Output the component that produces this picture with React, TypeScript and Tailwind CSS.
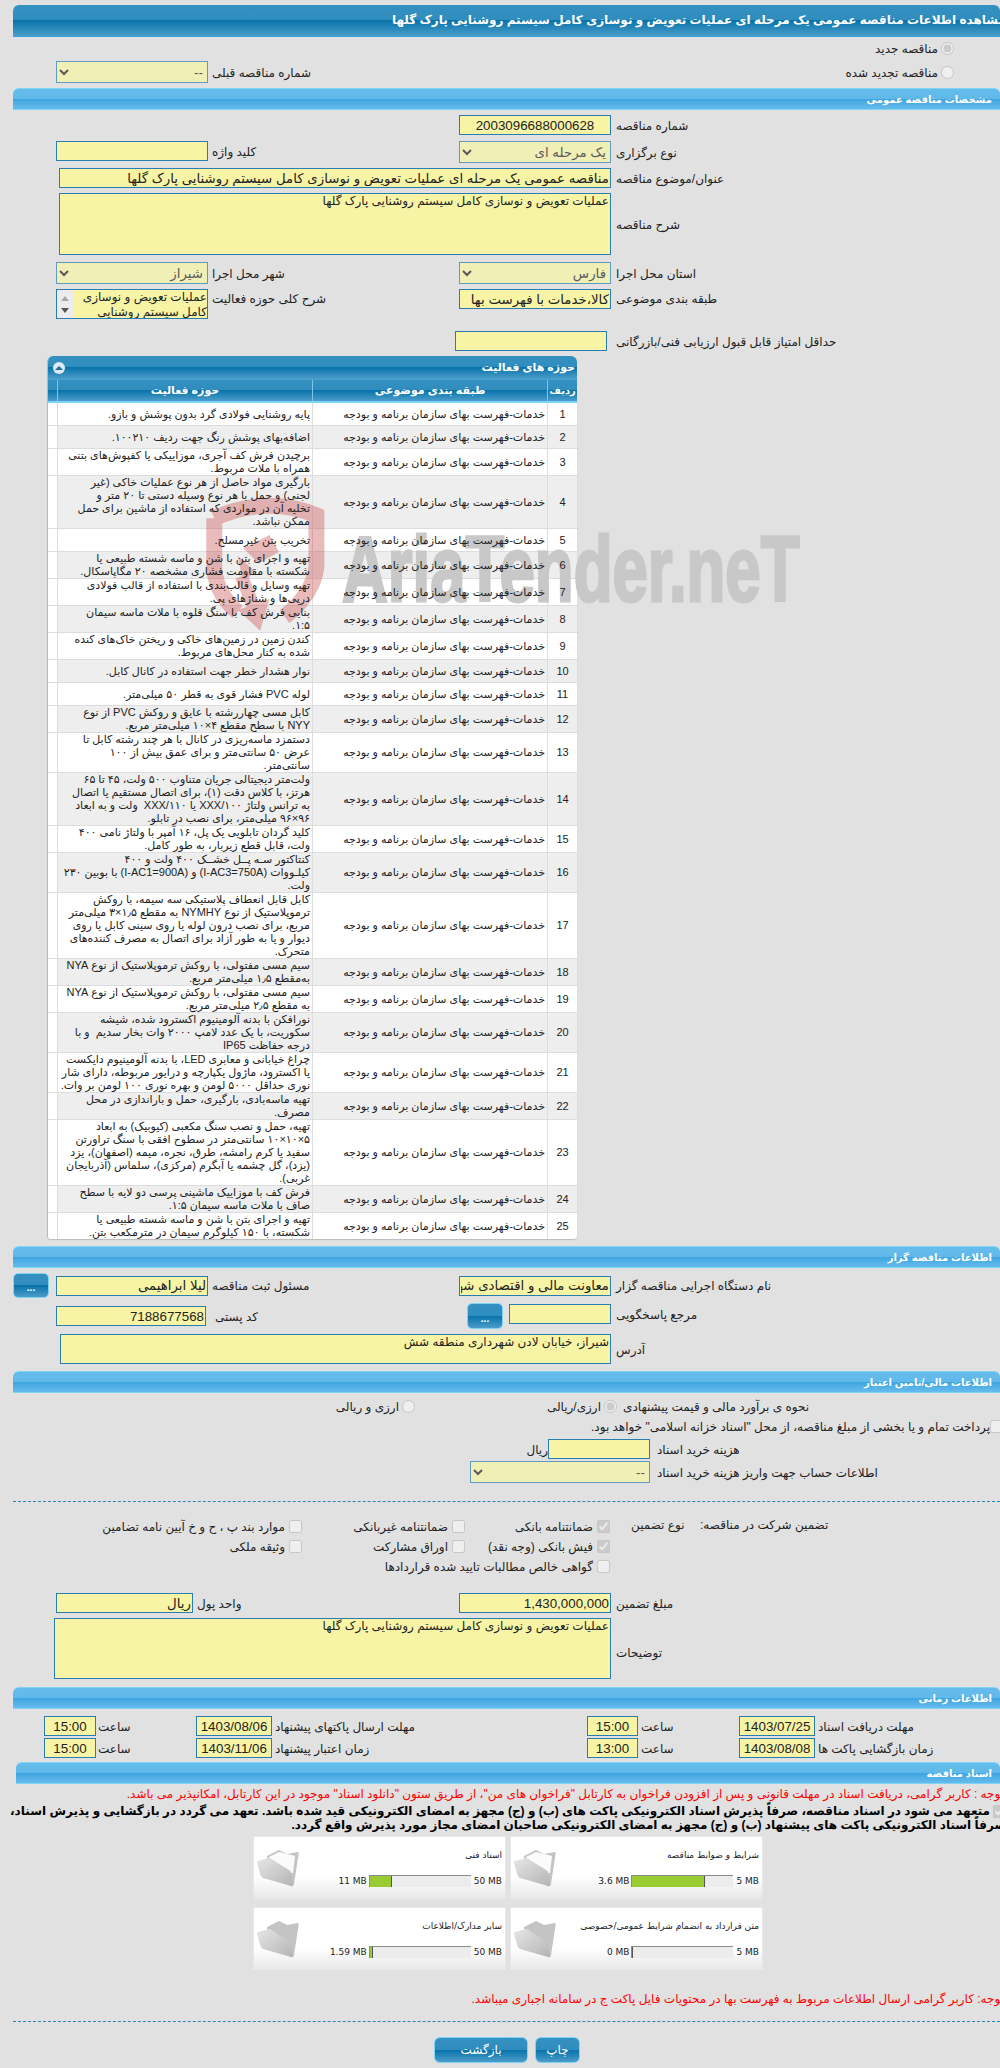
import React from 'react';

const darkBar = 'bg-[linear-gradient(to_bottom,#3490c0_0%,#2f8dbd_50%,#0873ab_50%,#4b9dc9_100%)]';
const lightBar = 'bg-[linear-gradient(to_bottom,#66bdec_0%,#60b8ea_50%,#3da5e0_50%,#66bcec_100%)] border-t border-b border-[#7fd3f5]';
const field = 'h-[20px] bg-[#f7f5a5] border border-[#2a7db0] px-[1px] text-[#222] outline-none text-[13.33px]';
const area = 'bg-[#f7f5a5] border border-[#2a7db0] px-[1px] text-[#222] outline-none resize-none block text-[12px] leading-[14px]';
const selectBox = 'h-[22px] bg-[#f7f5a5] border border-[#2a7db0] text-[#222] outline-none opacity-70 text-[13.33px]';

// line breaks follow the cell wrapping of the original table
const rows: [number, string][] = [
  [1, 'پایه روشنایی فولادی گرد بدون پوشش و بازو.'],
  [2, 'اضافه‌بهای پوشش رنگ جهت ردیف ۱۰۰۲۱۰.'],
  [3, 'برچیدن فرش کف آجری، موزاییکی یا کفپوش‌های بتنی\nهمراه با ملات مربوط.'],
  [4, 'بارگیری مواد حاصل از هر نوع عملیات خاکی (غیر\nلجنی) و حمل با هر نوع وسیله دستی تا ۲۰ متر و\nتخلیه آن در مواردی که استفاده از ماشین برای حمل\nممکن نباشد.'],
  [5, 'تخریب بتن غیرمسلح.'],
  [6, 'تهیه و اجرای بتن با شن و ماسه شسته طبیعی یا\nشکسته با مقاومت فشاری مشخصه ۲۰ مگاپاسکال.'],
  [7, 'تهیه وسایل و قالب‌بندی با استفاده از قالب فولادی\nدرپی‌ها و شناژهای پی.'],
  [8, 'بنایی فرش کف با سنگ قلوه با ملات ماسه سیمان\n۱:۵.'],
  [9, 'کندن زمین در زمین‌های خاکی و ریختن خاک‌های کنده\nشده به کنار محل‌های مربوط.'],
  [10, 'نوار هشدار خطر جهت استفاده در کانال کابل.'],
  [11, 'لوله PVC فشار قوی به قطر ۵۰ میلی‌متر.'],
  [12, 'کابل مسی چهاررشته با عایق و روکش PVC از نوع\nNYY با سطح مقطع ۴×۱۰ میلی‌متر مربع.'],
  [13, 'دستمزد ماسه‌ریزی در کانال با هر چند رشته کابل تا\nعرض ۵۰ سانتی‌متر و برای عمق بیش از ۱۰۰\nسانتی‌متر.'],
  [14, 'ولت‌متر دیجیتالی جریان متناوب ۵۰۰ ولت، ۴۵ تا ۶۵\nهرتز، با کلاس دقت (۱)، برای اتصال مستقیم یا اتصال\nبه ترانس ولتاژ XXX/۱۰۰ یا XXX/۱۱۰  ولت و به ابعاد\n۹۶×۹۶ میلی‌متر، برای نصب در تابلو.'],
  [15, 'کلید گردان تابلویی یک پل، ۱۶ آمپر با ولتاژ نامی ۴۰۰\nولت، قابل قطع زیربار، به طور کامل.'],
  [16, 'کنتاکتور سـه پــل خشــک ۴۰۰ ولت و ۴۰۰\nکیلـووات (I-AC3=750A) و (I-AC1=900A) با بوبین ۲۳۰\nولت.'],
  [17, 'کابل قابل انعطاف پلاستیکی سه سیمه، با روکش\nترموپلاستیک از نوع NYMHY به مقطع ۱٫۵×۳ میلی‌متر\nمربع، برای نصب درون لوله یا روی سینی کابل یا روی\nدیوار و یا به طور آزاد برای اتصال به مصرف کننده‌های\nمتحرک.'],
  [18, 'سیم مسی مفتولی، با روکش ترموپلاستیک از نوع NYA\nبه‌مقطع ۱٫۵ میلی‌متر مربع.'],
  [19, 'سیم مسی مفتولی، با روکش ترموپلاستیک از نوع NYA\nبه مقطع ۲٫۵ میلی‌متر مربع.'],
  [20, 'نورافکن با بدنه آلومینیوم اکسترود شده، شیشه\nسکوریت، با یک عدد لامپ ۲۰۰۰ وات بخار سدیم  و با\nدرجه حفاظت IP65'],
  [21, 'چراغ خیابانی و معابری LED، با بدنه آلومینیوم دایکست\nیا اکسترود، ماژول یکپارچه و درایور مربوطه، دارای شار\nنوری حداقل ۵۰۰۰ لومن و بهره نوری ۱۰۰ لومن بر وات.'],
  [22, 'تهیه ماسه‌بادی، بارگیری، حمل و باراندازی در محل\nمصرف.'],
  [23, 'تهیه، حمل و نصب سنگ مکعبی (کیوبیک) به ابعاد\n۵×۱۰×۱۰ سانتی‌متر در سطوح افقی با سنگ تراورتن\nسفید یا کرم رامشه، طرق، نجره، میمه (اصفهان)، یزد\n(یزد)، گل چشمه یا آبگرم (مرکزی)، سلماس (آذربایجان\nغربی).'],
  [24, 'فرش کف با موزاییک ماشینی پرسی دو لایه با سطح\nصاف با ملات ماسه سیمان ۱:۵.'],
  [25, 'تهیه و اجرای بتن با شن و ماسه شسته طبیعی یا\nشکسته، با ۱۵۰ کیلوگرم سیمان در مترمکعب بتن.'],
];

const Label: React.FC<{ children: React.ReactNode; className?: string }> = ({ children, className = 'text-left' }) => (
  <span dir="rtl" className={`whitespace-nowrap pt-[2px] ${className}`}>{children}</span>
);

const Field: React.FC<{ value?: string; className?: string }> = ({ value = '', className = '' }) => (
  <input dir="rtl" readOnly value={value} className={`${field} ${className}`} />
);

const Pick: React.FC<{ value: string; className?: string }> = ({ value, className = '' }) => (
  <select dir="rtl" disabled className={`${selectBox} ${className}`}>
    <option>{value}</option>
  </select>
);

const SectionBar: React.FC<{ title: string; className?: string }> = ({ title, className = 'ml-[13px]' }) => (
  <div dir="rtl" className={`${lightBar} ${className} h-[22px] rounded-t-[6px] flex items-center pr-[8px] text-white font-bold text-[10px]`}>
    {title}
  </div>
);

const Row: React.FC<{ left?: React.ReactNode; right?: React.ReactNode; className?: string }> = ({ left, right, className = '' }) => (
  <div className={`flex ml-[56px] ${className}`}>
    <div className="w-[403px] flex items-center gap-[4px] shrink-0">{left}</div>
    <div className="flex items-center gap-[5px]">{right}</div>
  </div>
);

const DotsButton: React.FC<{ className?: string }> = ({ className = '' }) => (
  <button className={`${darkBar} w-[36px] h-[25px] shrink-0 rounded-[5px] border border-[#7fd3f5] text-white text-[10px] font-bold pt-[4px] ${className}`}>...</button>
);

const Check: React.FC<{ label: string; checked?: boolean }> = ({ label, checked }) => (
  <div className="flex items-center gap-[4px] h-[20px]">
    <input type="checkbox" disabled defaultChecked={checked} className="shrink-0" />
    <span className="whitespace-nowrap pt-[2px]">{label}</span>
  </div>
);

const Folder: React.FC<{ paper?: boolean }> = ({ paper }) => (
  <svg viewBox="0 0 42 38" className="w-[42px] h-[38px] shrink-0">
    <defs>
      <linearGradient id="fold" x1="0" y1="0" x2="1" y2="1">
        <stop offset="0" stopColor="#e6e6e6" />
        <stop offset="1" stopColor="#b4b4b4" />
      </linearGradient>
    </defs>
    <path d="M10 7 L22 1 L30 5 L41 3 Q42 3 41.5 6 L37 35 Q36.5 38 34 37 L12 28 Z" fill="#c4c4c4" />
    {paper && <path d="M12 8 L22 3 L38 7 L36 24 L16 22 Z" fill="#fbfbfb" />}
    <path d="M1 12 L12 9 Q14 9 16 11 L32 21 Q34 22 34.5 25 L36 36 Q36 38 34 37 L6 29 Q4 28 3.5 26 L0 14 Q0 12 1 12 Z" fill="url(#fold)" />
  </svg>
);

const FileCard: React.FC<{ title: string; used: string; max: string; pct: number; paper?: boolean }> = ({ title, used, max, pct, paper }) => (
  <div className="h-[63px] flex items-center pl-[3px] pr-[3px] bg-[linear-gradient(to_bottom,#ffffff_0%,#ffffff_65%,#e8e8e8_100%)] border border-[#e8e8e8] font-['DejaVu_Sans',sans-serif] text-[9px] text-[#222]">
    <Folder paper={paper} />
    <div className="flex-1 flex flex-col items-end">
      <div dir="rtl" className="whitespace-nowrap leading-[13px]">{title}</div>
      <div className="flex items-center gap-[2px] mt-[13px] leading-[12px]">
        <span>{used}</span>
        <div className="w-[102px] h-[12px] bg-[#ececec] border-t border-l border-[#8c8c8c]">
          <div className="h-full bg-[#99cc33] border-r border-[#555]" style={{ width: `${pct}%` }} />
        </div>
        <span className="ml-[1px]">{max}</span>
      </div>
    </div>
  </div>
);

export default function App() {
  return (
    <div className="relative w-[1000px] h-[2068px] overflow-hidden bg-[#e1e1e1] pt-[5px] text-[12px] leading-[13px] text-[#222] font-['Liberation_Sans','DejaVu_Sans',sans-serif]">
      {/* Header */}
      <div dir="rtl" className={`${darkBar} ml-[13px] h-[32px] rounded-t-[6px] border-b border-[#3aa0dc] flex items-center overflow-hidden text-white font-bold text-[12px]`}>
        <span className="-mr-[6px] whitespace-nowrap">مشاهده اطلاعات مناقصه عمومی یک مرحله ای عملیات تعویض و نوسازی کامل سیستم روشنایی پارک گلها</span>
      </div>

      <div dir="rtl" className="flex items-center h-[22px] pr-[46px] gap-[3px]">
        <input type="radio" name="kind" disabled defaultChecked />
        <span className="pt-[2px]">مناقصه جدید</span>
      </div>
      <div className="flex items-center h-[22px] mt-[2px] ml-[56px]">
        <select dir="rtl" disabled className={`${selectBox} w-[152px]`}><option>--</option></select>
        <Label className="ml-[4px]">شماره مناقصه قبلی</Label>
        <div dir="rtl" className="flex items-center gap-[3px] ml-auto mr-[46px]">
          <input type="radio" name="kind" disabled />
          <span className="pt-[2px]">مناقصه تجدید شده</span>
        </div>
      </div>

      <SectionBar title="مشخصات مناقصه عمومی" className="ml-[13px] mt-[5px]" />
      <Row className="mt-[5px]" right={<><Field value="2003096688000628" className="w-[152px] text-center" /><Label>شماره مناقصه</Label></>} />
      <Row
        className="mt-[6px]"
        left={<><Field className="w-[152px] self-start" /><Label className="self-start mt-[3px]">کلید واژه</Label></>}
        right={<><Pick value="یک مرحله ای" className="w-[152px]" /><Label>نوع برگزاری</Label></>}
      />
      <div className="flex items-center ml-[59px] mt-[5px] gap-[5px]">
        <Field value="مناقصه عمومی یک مرحله ای عملیات تعویض و نوسازی کامل سیستم روشنایی پارک گلها" className="w-[552px]" />
        <Label>عنوان/موضوع مناقصه</Label>
      </div>
      <div className="flex items-center ml-[59px] mt-[5px] gap-[5px]">
        <textarea dir="rtl" readOnly value="عملیات تعویض و نوسازی کامل سیستم روشنایی پارک گلها" className={`${area} w-[552px] h-[62px]`} />
        <Label>شرح مناقصه</Label>
      </div>
      <Row
        className="mt-[7px]"
        left={<><Pick value="شیراز" className="w-[152px]" /><Label>شهر محل اجرا</Label></>}
        right={<><Pick value="فارس" className="w-[152px]" /><Label>استان محل اجرا</Label></>}
      />
      <div className="flex ml-[56px] mt-[5px]">
        <div className="w-[403px] flex items-start gap-[4px] shrink-0">
          <div className="relative w-[152px] h-[30px] shrink-0">
            <textarea dir="rtl" readOnly rows={2} value="عملیات تعویض و نوسازی کامل سیستم روشنایی" className={`${area} w-full h-full overflow-hidden !leading-[15px] pr-0 pl-[17px] bg-[linear-gradient(to_right,#ececec_17px,#f7f5a5_17px)]`} />
            <span className="absolute left-[5px] top-[7px] w-0 h-0 border-x-[4px] border-x-transparent border-b-[5px] border-b-[#aaa]" />
            <span className="absolute left-[5px] top-[19px] w-0 h-0 border-x-[4px] border-x-transparent border-t-[5px] border-t-[#555]" />
          </div>
          <Label className="mt-[2px]">شرح کلی حوزه فعالیت</Label>
        </div>
        <div className="flex items-start gap-[5px]">
          <Field value="کالا،خدمات با فهرست بها" className="w-[152px]" />
          <Label className="mt-[2px]">طبقه بندی موضوعی</Label>
        </div>
      </div>
      <div className="flex items-center ml-[455px] mt-[12px] gap-[9px]">
        <Field className="w-[152px]" />
        <Label>حداقل امتیاز قابل قبول ارزیابی فنی/بازرگانی</Label>
      </div>

      {/* Activities table */}
      <div dir="rtl" className="ml-[47px] w-[530px] mt-[5px] h-[883px] rounded-t-[6px] rounded-b-[4px] overflow-hidden border-l border-[#8cc8ea] shadow-[0_1px_1px_#bbb] text-[11px]">
        <div className={`${darkBar} h-[23px] flex items-center justify-between pr-[2px] pl-[5px] text-white font-bold`}>
          <span>حوزه های فعالیت</span>
          <span className="w-[12px] h-[12px] rounded-full bg-[#dfe9f5] flex items-center justify-center">
            <span className="w-0 h-0 border-x-[4px] border-x-transparent border-b-[4px] border-b-[#1a6ea5]" />
          </span>
        </div>
        <div className={`${darkBar} h-[24px] grid grid-cols-[30px_235px_255px_10px] text-white font-bold border-t border-[#4f9fd0] border-b-2 border-b-[#7fd3f5]`}>
          <div className="flex items-center justify-center border-l border-[#7fc4ea] whitespace-nowrap text-[10px]">ردیف</div>
          <div className="flex items-center justify-center border-l border-[#7fc4ea]">طبقه بندی موضوعی</div>
          <div className="flex items-center justify-center border-l border-[#7fc4ea]">حوزه فعالیت</div>
          <div />
        </div>
        {rows.map(([n, text]) => (
          <div key={n} className={`grid grid-cols-[30px_235px_255px_10px] min-h-[23px] border-b border-[#dddddd] text-[#222] ${n % 2 === 0 ? 'bg-[#eeeeee]' : 'bg-white'}`}>
            <div className="flex items-center justify-center border-l border-[#dddddd]"><span className="relative z-10">{n}</span></div>
            <div className="flex items-center pr-[2px] border-l border-[#dddddd] whitespace-nowrap"><span className="relative z-10">خدمات-فهرست بهای سازمان برنامه و بودجه</span></div>
            <div className="flex items-center pr-[2px] border-l border-[#dddddd]"><span className="relative z-10 whitespace-pre">{text}</span></div>
            <div className="bg-white" />
          </div>
        ))}
      </div>

      <SectionBar title="اطلاعات مناقصه گزار" className="ml-[13px] mt-[7px]" />
      <div className="flex items-center ml-[13px] mt-[5px] h-[25px]">
        <DotsButton />
        <div className="w-[410px] ml-[7px] flex items-center gap-[4px] shrink-0">
          <Field value="لیلا ابراهیمی" className="w-[152px]" />
          <Label>مسئول ثبت مناقصه</Label>
        </div>
        <div className="flex items-center gap-[5px] -ml-[7px]">
          <Field value="معاونت مالی و اقتصادی شهرداری منطقه شش" className="w-[152px]" />
          <Label>نام دستگاه اجرایی مناقصه گزار</Label>
        </div>
      </div>
      <div className="flex ml-[56px] mt-[5px] h-[26px]">
        <div className="w-[403px] flex items-start gap-[9px] shrink-0 pt-[3px]">
          <Field value="7188677568" className="w-[150px]" />
          <Label className="mt-[3px]">کد پستی</Label>
        </div>
        <div className="flex items-start pl-[8px]">
          <DotsButton className="h-[26px]" />
          <Field className="w-[102px] ml-[6px] mt-[1px]" />
          <Label className="ml-[5px] mt-[4px]">مرجع پاسخگویی</Label>
        </div>
      </div>
      <div className="flex items-center ml-[60px] mt-[5px] gap-[5px]">
        <textarea dir="rtl" readOnly value="شیراز، خیابان لادن شهرداری منطقه شش" className={`${area} w-[551px] h-[30px]`} />
        <Label>آدرس</Label>
      </div>

      <SectionBar title="اطلاعات مالی/تامین اعتبار" className="ml-[13px] mt-[7px]" />
      <div className="flex items-center h-[22px] mt-[2px] ml-[337px]">
        <Label className="w-[62px] text-right">ارزی و ریالی</Label>
        <input type="radio" name="cur" disabled className="ml-[3px]" />
        <Label className="w-[61px] ml-[125px] text-right">ارزی/ریالی</Label>
        <input type="radio" name="cur" disabled defaultChecked className="ml-[3px]" />
        <Label className="ml-[6px]">نحوه ی برآورد مالی و قیمت پیشنهادی</Label>
      </div>
      <div dir="rtl" className="flex items-center h-[18px] -mr-[3px]">
        <input type="checkbox" disabled className="shrink-0" />
        <span className="whitespace-nowrap pt-[2px]">پرداخت تمام و یا بخشی از مبلغ مناقصه، از محل "اسناد خزانه اسلامی" خواهد بود.</span>
      </div>
      <div className="flex items-center ml-[528px] mt-[4px] h-[20px]">
        <Label className="w-[20px]">ریال</Label>
        <Field className="w-[102px]" />
        <Label className="ml-[7px]">هزینه خرید اسناد</Label>
      </div>
      <div className="flex items-center ml-[470px] mt-[2px]">
        <select dir="rtl" disabled className={`${selectBox} w-[180px]`}><option>--</option></select>
        <Label className="ml-[7px]">اطلاعات حساب جهت واریز هزینه خرید اسناد</Label>
      </div>
      <div className="ml-[13px] mt-[18px] border-t border-dashed border-[#2a86b8]" />

      <div className="flex mt-[14px]">
        <div dir="rtl" className="w-[610px] shrink-0 grid grid-cols-[145px_163px_auto] justify-start">
          <Check label="ضمانتنامه بانکی" checked />
          <Check label="ضمانتنامه غیربانکی" />
          <Check label="موارد بند پ ، ح و خ آیین نامه تضامین" />
          <Check label="فیش بانکی (وجه نقد)" checked />
          <Check label="اوراق مشارکت" />
          <Check label="وثیقه ملکی" />
          <Check label="گواهی خالص مطالبات تایید شده قراردادها" />
        </div>
        <Label className="ml-[21px] w-[69px] text-left mt-[1px]">نوع تضمین</Label>
        <Label className="mt-[1px]">تضمین شرکت در مناقصه:</Label>
      </div>

      <Row
        className="mt-[17px]"
        left={<><Field value="ریال" className="w-[137px]" /><Label>واحد پول</Label></>}
        right={<><Field value="1,430,000,000" className="w-[152px]" /><Label>مبلغ تضمین</Label></>}
      />
      <div className="flex items-center ml-[54px] mt-[5px] gap-[5px]">
        <textarea dir="rtl" readOnly value="عملیات تعویض و نوسازی کامل سیستم روشنایی پارک گلها" className={`${area} w-[557px] h-[61px]`} />
        <Label className="mt-[8px]">توضیحات</Label>
      </div>

      <SectionBar title="اطلاعات زمانی" className="ml-[13px] mt-[8px]" />
      <div className="ml-[44px] mt-[7px] grid grid-cols-[52px_100px_76px_315px_51px_101px_76px_auto] gap-y-[2px] items-center">
        <Field value="15:00" className="w-full text-center" />
        <Label className="text-left pl-[2px]">ساعت</Label>
        <Field value="1403/08/06" className="w-full text-center" />
        <Label className="text-left pl-[3px]">مهلت ارسال پاکتهای پیشنهاد</Label>
        <Field value="15:00" className="w-full text-center" />
        <Label className="text-left pl-[3px]">ساعت</Label>
        <Field value="1403/07/25" className="w-full text-center" />
        <Label className="text-left pl-[3px]">مهلت دریافت اسناد</Label>
        <Field value="15:00" className="w-full text-center" />
        <Label className="text-left pl-[2px]">ساعت</Label>
        <Field value="1403/11/06" className="w-full text-center" />
        <Label className="text-left pl-[3px]">زمان اعتبار پیشنهاد</Label>
        <Field value="13:00" className="w-full text-center" />
        <Label className="text-left pl-[3px]">ساعت</Label>
        <Field value="1403/08/08" className="w-full text-center" />
        <Label className="text-left pl-[3px]">زمان بازگشایی پاکت ها</Label>
      </div>

      <SectionBar title="اسناد مناقصه" className="ml-[16px] mt-[4px]" />
      <div dir="rtl" className="text-[#f00] whitespace-nowrap mt-[4px] -mr-[4px]">
        توجه : کاربر گرامی، دریافت اسناد در مهلت قانونی و پس از افزودن فراخوان به کارتابل "فراخوان های من"، از طریق ستون "دانلود اسناد" موجود در این کارتابل، امکانپذیر می باشد.
      </div>
      <div dir="rtl" className="font-bold text-black -mr-[6px] mt-[3px] leading-[14px] text-[12px] whitespace-nowrap">
        <input type="checkbox" disabled defaultChecked className="align-middle ml-[3px]" />
        متعهد می شود در اسناد مناقصه، صرفاً پذیرش اسناد الکترونیکی پاکت های (ب) و (ج) مجهز به امضای الکترونیکی قید شده باشد. تعهد می گردد در بازگشایی و پذیرش اسناد،
        <br />
        صرفاً اسناد الکترونیکی پاکت های پیشنهاد (ب) و (ج) مجهز به امضای الکترونیکی صاحبان امضای مجاز مورد پذیرش واقع گردد.
      </div>
      <div className="ml-[253px] mt-[4px] grid grid-cols-[253px_253px] gap-x-[4px] gap-y-[8px]">
        <FileCard title="اسناد فنی" used="11 MB" max="50 MB" pct={22} paper />
        <FileCard title="شرایط و ضوابط مناقصه" used="3.6 MB" max="5 MB" pct={72} paper />
        <FileCard title="سایر مدارک/اطلاعات" used="1.59 MB" max="50 MB" pct={3} />
        <FileCard title="متن قرارداد به انضمام شرایط عمومی/خصوصی" used="0 MB" max="5 MB" pct={0} />
      </div>
      <div dir="rtl" className="text-[#f00] whitespace-nowrap mt-[23px] -mr-[4px]">
        توجه: کاربر گرامی ارسال اطلاعات مربوط به فهرست بها در محتویات فایل پاکت ج در سامانه اجباری میباشد.
      </div>
      <div className="ml-[13px] mt-[15px] border-t border-dashed border-[#2a86b8]" />
      <div className="flex ml-[434px] mt-[15px] gap-[7px]">
        <button className={`${darkBar} w-[94px] h-[26px] rounded-[6px] border border-[#7fd3f5] text-white`}>بازگشت</button>
        <button className={`${darkBar} w-[45px] h-[26px] rounded-[6px] border border-[#7fd3f5] text-white`}>چاپ</button>
      </div>

      {/* Watermark */}
      <div className="absolute left-0 top-0 w-full h-full pointer-events-none z-[5]">
        <svg viewBox="0 0 130 160" className="absolute left-[196px] top-[490px] w-[134px] h-[150px] opacity-[0.35]" fill="none" stroke="#c83c3c">
          <path d="M13 30 Q70 5 122 27 L122 82 Q118 112 88 135" strokeWidth="17" />
          <path d="M13 30 L13 85 Q16 112 38 130" strokeWidth="17" />
          <path d="M44 62 L72 48 L82 66 L60 78 Z M44 100 L38 70 L56 86 Z" fill="#c83c3c" stroke="none" />
          <path d="M42 92 L58 132" strokeWidth="14" />
          <path d="M38 128 L72 116 L62 150 Z" fill="#c83c3c" stroke="none" />
        </svg>
        <div className="absolute left-[342px] top-[519px] origin-left scale-x-[0.69] text-[92px] leading-[100px] font-bold whitespace-nowrap text-[#c8c8c8] font-['Liberation_Sans',sans-serif] [-webkit-text-stroke:3px_#c8c8c8]">
          AriaTender.neT
        </div>
      </div>
    </div>
  );
}
